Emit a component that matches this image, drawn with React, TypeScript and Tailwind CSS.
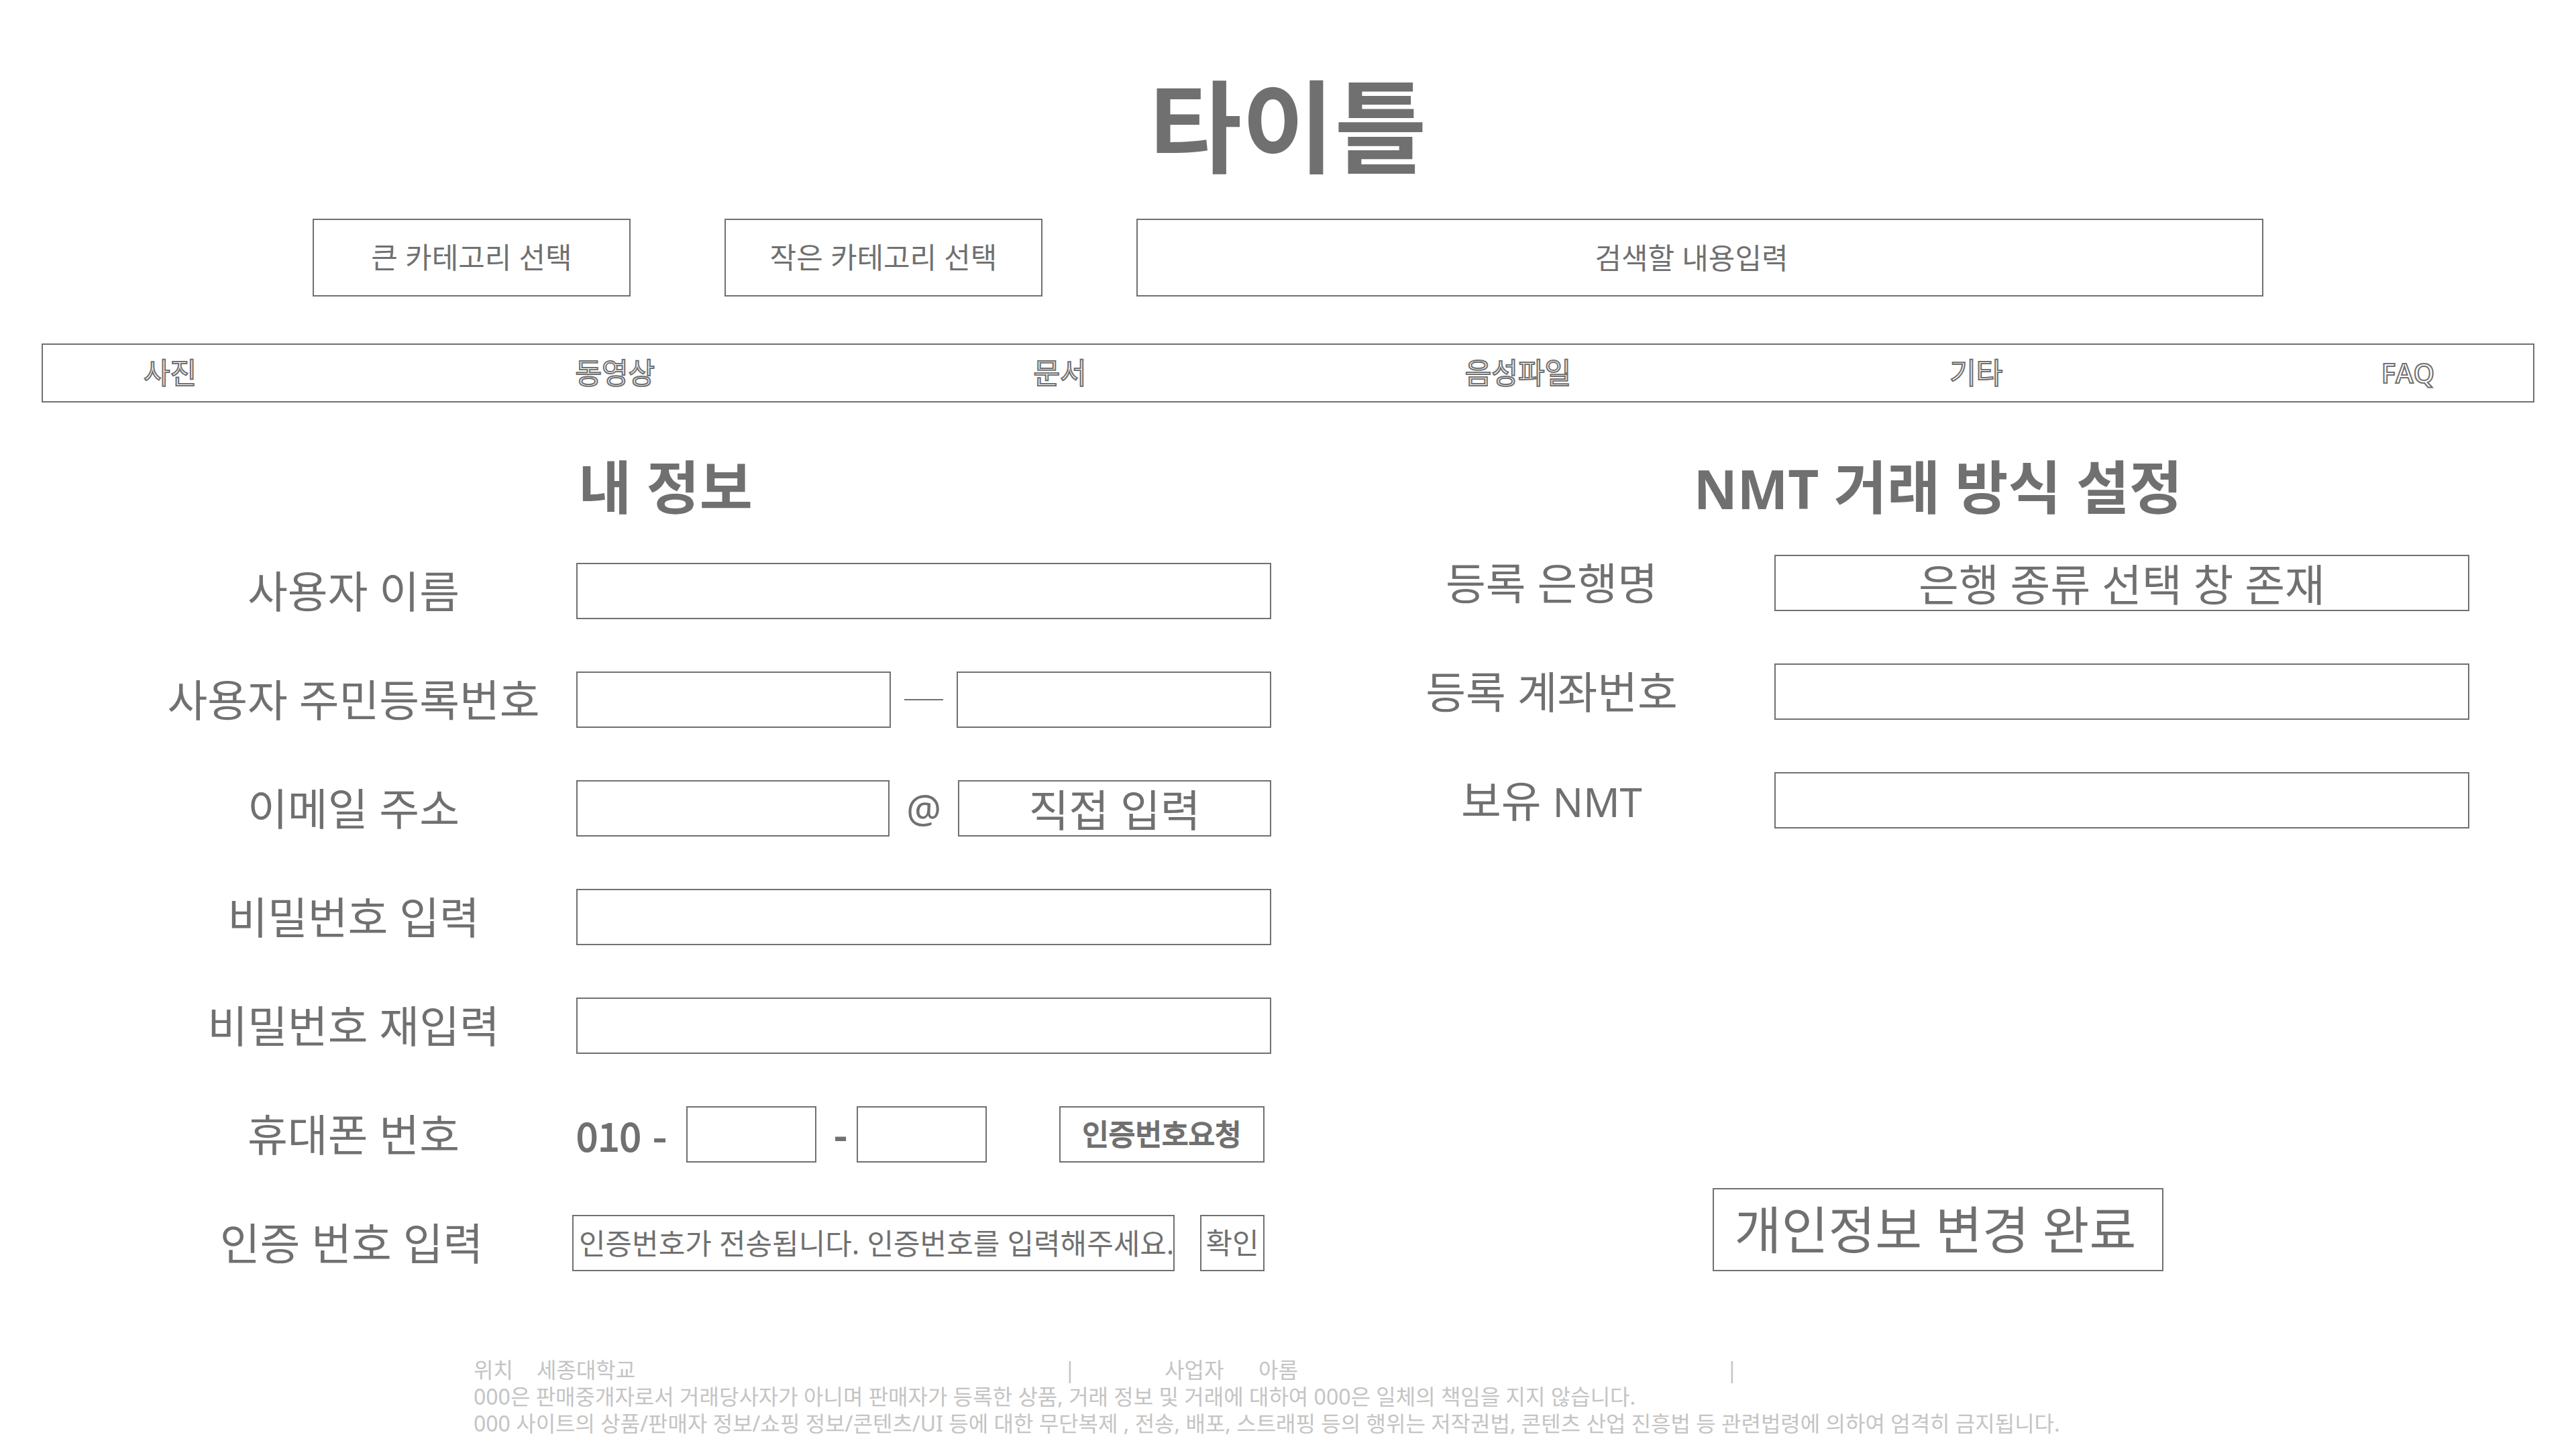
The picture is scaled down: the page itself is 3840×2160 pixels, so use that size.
import type { ReactNode } from "react";

const box = "border-2 border-[#707070] bg-white text-[#707070] outline-none";
const field = `${box} h-[84px] min-w-0 w-full px-4 text-[43px]`;
const picker = `${box} appearance-none text-center [text-align-last:center]`;
const fieldPicker = `${picker} h-[84px] w-full min-w-0 pt-1 text-[65px] leading-[76px]`;
const thick = "[-webkit-text-stroke:2px_#707070]";

const navItems = ["사진", "동영상", "문서", "음성파일", "기타"];

function Row({ label, htmlFor, children }: { label: ReactNode; htmlFor: string; children: ReactNode }) {
  return (
    <div className="grid grid-cols-[664fr_1036fr] items-center">
      <label htmlFor={htmlFor} className="text-center text-[65px] leading-[84px] whitespace-nowrap">
        {label}
      </label>
      {children}
    </div>
  );
}

export default function App() {
  return (
    <div className="w-full bg-white pt-[113px] pb-[18px] font-['Noto_Sans','Noto_Sans_CJK_KR',sans-serif] text-[#707070]">
      <h1 className="text-center text-[150px] leading-[150px] font-bold">타이틀</h1>

      <form className="mt-[63px] flex gap-[140px] px-[466px]">
        <select aria-label="큰 카테고리" className={`${picker} h-[116px] w-[474px] text-[43px]`}>
          <option>큰 카테고리 선택</option>
        </select>
        <select aria-label="작은 카테고리" className={`${picker} h-[116px] w-[474px] text-[43px]`}>
          <option>작은 카테고리 선택</option>
        </select>
        <input
          type="search"
          aria-label="검색"
          placeholder="검색할 내용입력"
          className={`${box} h-[116px] min-w-0 flex-1 text-center text-[43px] placeholder:text-[#707070] placeholder:opacity-100`}
        />
      </form>

      <nav className="mx-[62px] mt-[70px] flex h-[88px] items-center justify-between border-2 border-[#707070] pr-[147px] pl-[150px]">
        {navItems.map((item) => (
          <a key={item} href="#" className={`text-[43px] leading-[60px] text-white ${thick}`}>
            {item}
          </a>
        ))}
        <a href="#" className={`font-['Open_Sans',sans-serif] text-[40px] leading-[60px] font-semibold text-white ${thick}`}>
          FAQ
        </a>
      </nav>

      <main className="mt-[76px] grid grid-cols-2 gap-[86px] pr-[159px] pl-[195px]">
        <section>
          <h2 className="pr-[106px] text-center text-[86px] leading-[100px] font-bold">내 정보</h2>
          <form className="mt-[63px] flex flex-col gap-[78px]">
            <Row label="사용자 이름" htmlFor="name">
              <input id="name" type="text" className={field} />
            </Row>
            <Row label="사용자 주민등록번호" htmlFor="rrn1">
              <div className="grid grid-cols-[1fr_98px_1fr] items-center">
                <input id="rrn1" type="text" className={field} />
                <span className="mx-5 h-[2px] bg-[#707070]" />
                <input type="text" aria-label="주민등록번호 뒷자리" className={field} />
              </div>
            </Row>
            <Row label="이메일 주소" htmlFor="email">
              <div className="grid grid-cols-[1fr_102px_1fr] items-center">
                <input id="email" type="text" className={field} />
                <span className="text-center text-[58px] leading-[84px]">@</span>
                <select aria-label="이메일 도메인" className={fieldPicker}>
                  <option>직접 입력</option>
                </select>
              </div>
            </Row>
            <Row label="비밀번호 입력" htmlFor="pw">
              <input id="pw" type="password" className={field} />
            </Row>
            <Row label="비밀번호 재입력" htmlFor="pw2">
              <input id="pw2" type="password" className={field} />
            </Row>
            <Row label="휴대폰 번호" htmlFor="tel1">
              <div className="flex items-center pr-[10px]">
                <span className={`flex w-[164px] shrink-0 gap-[18px] font-['Noto_Sans_CJK_KR',sans-serif] text-[58px] leading-[80px] ${thick}`}>
                  <span>010</span>
                  <span>-</span>
                </span>
                <input id="tel1" type="tel" className={`${box} h-[84px] w-[194px] px-4 text-[43px]`} />
                <span className={`w-[60px] shrink-0 pl-3 text-center text-[58px] leading-[80px] ${thick}`}>-</span>
                <input type="tel" aria-label="휴대폰 번호 뒷자리" className={`${box} h-[84px] w-[194px] px-4 text-[43px]`} />
                <button type="button" className={`${box} ${thick} ml-auto h-[84px] w-[306px] shrink-0 text-[43px] leading-[80px]`}>
                  인증번호요청
                </button>
              </div>
            </Row>
            <Row label="인증 번호 입력" htmlFor="code">
              <div className="flex items-center justify-end gap-[38px] pr-[10px]">
                <input
                  id="code"
                  type="text"
                  placeholder="인증번호가 전송됩니다. 인증번호를 입력해주세요."
                  className={`${box} h-[84px] w-[898px] shrink-0 pl-[8px] text-[43px] placeholder:text-[#707070] placeholder:opacity-100`}
                />
                <button type="button" className={`${box} h-[84px] w-[96px] shrink-0 text-[43px] leading-[80px] whitespace-nowrap`}>
                  확인
                </button>
              </div>
            </Row>
          </form>
        </section>

        <section className="flex flex-col">
          <h2 className="pl-[116px] text-center text-[86px] leading-[100px] font-bold">
            <span className="text-[80px] leading-none">NMT</span> 거래 방식 설정
          </h2>
          <form className="mt-[51px] flex flex-1 flex-col gap-[78px]">
            <Row label="등록 은행명" htmlFor="bank">
              <select id="bank" className={fieldPicker}>
                <option>은행 종류 선택 창 존재</option>
              </select>
            </Row>
            <Row label="등록 계좌번호" htmlFor="account">
              <input id="account" type="text" className={field} />
            </Row>
            <Row
              label={
                <>
                  보유 <span className="text-[60px] leading-none">NMT</span>
                </>
              }
              htmlFor="nmt"
            >
              <input id="nmt" type="text" className={field} />
            </Row>
            <div className="mt-auto flex justify-center pl-[116px]">
              <button type="submit" className={`${box} h-[124px] w-[672px] pr-2 text-[76px] leading-[120px]`}>
                개인정보 변경 완료
              </button>
            </div>
          </form>
        </section>
      </main>

      <footer className="mt-[127px] pl-[706px] text-[32px] leading-[40px] whitespace-nowrap text-[#c4c4c4]">
        <div className="flex">
          <span className="w-[94px]">위치</span>
          <span className="w-[786px]">세종대학교</span>
          <span className="w-[150px]">|</span>
          <span className="w-[140px]">사업자</span>
          <span className="w-[697px]">아롬</span>
          <span>|</span>
        </div>
        <p>000은 판매중개자로서 거래당사자가 아니며 판매자가 등록한 상품, 거래 정보 및 거래에 대하여 000은 일체의 책임을 지지 않습니다.</p>
        <p>000 사이트의 상품/판매자 정보/쇼핑 정보/콘텐츠/UI 등에 대한 무단복제 , 전송, 배포, 스트래핑 등의 행위는 저작권법, 콘텐츠 산업 진흥법 등 관련법령에 의하여 엄격히 금지됩니다.</p>
      </footer>
    </div>
  );
}
